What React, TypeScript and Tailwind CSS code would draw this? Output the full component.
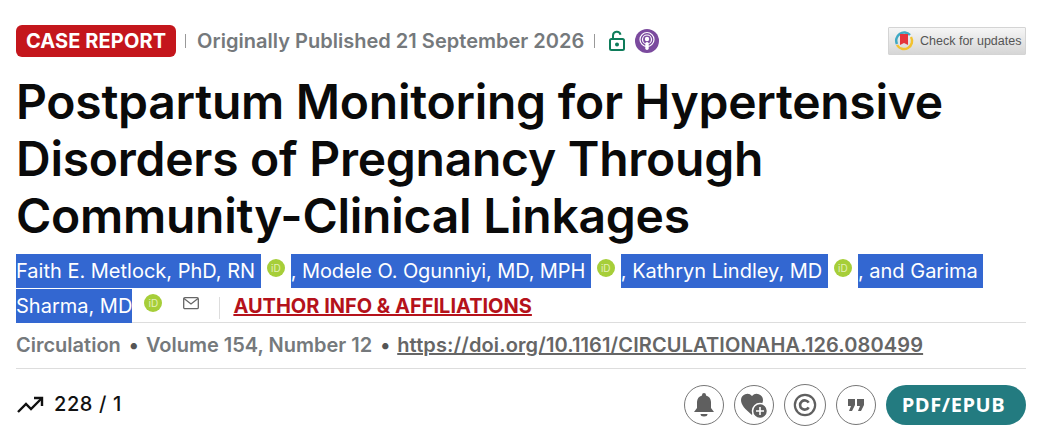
import React from "react";

const Orcid = ({ cls = "" }: { cls?: string }) => (
  <span className={`inline-flex items-center justify-center w-[18px] h-[18px] rounded-full bg-[#a6ce39] text-[#e4f0bb] text-[10px] leading-none align-[6px] ${cls}`}>
    iD
  </span>
);

const Sel = ({ children, cls = "" }: { children: React.ReactNode; cls?: string }) => (
  <span className={`bg-[#3367d1] text-white py-[5px] ${cls}`}>{children}</span>
);

const Circle = ({ children, size = "w-[40px] h-[40px]" }: { children: React.ReactNode; size?: string }) => (
  <button className={`${size} rounded-full border border-[#777] flex items-center justify-center bg-white`}>{children}</button>
);

export default function App() {
  return (
    <div className="w-[1039px] h-[439px] overflow-hidden bg-white pl-4 pr-[13px] pt-[25px] font-['Inter',sans-serif]">
      <div className="flex items-center h-[32px]">
        <span className="h-[32px] px-[10px] rounded-[6px] bg-[#c4161c] text-white font-bold text-[20px] leading-[32px] tracking-[0.1px]">CASE REPORT</span>
        <span className="w-px h-[14px] bg-[#999] ml-[9px] mr-[11px]" />
        <span className="text-[20px] font-semibold text-[#75797c] tracking-[0.02px]">Originally Published 21 September 2026</span>
        <span className="w-px h-[14px] bg-[#999] ml-[10px] mr-[13px]" />
        <svg width="18" height="22" viewBox="0 0 18 22" fill="none" stroke="#0e7c5a" strokeWidth="2">
          <rect x="2" y="9" width="14" height="11" rx="1.5" />
          <path d="M5 9V5.500a3.800 3.800 0 0 1 7.500-.8" />
          <circle cx="9" cy="14.500" r="1" fill="#0e7c5a" />
        </svg>
        <svg className="ml-[9px]" width="24" height="24" viewBox="0 0 24 24">
          <circle cx="12" cy="12" r="12" fill="#7b4a9e" />
          <g fill="none" stroke="#fff" strokeWidth="1.200">
            <circle cx="12" cy="10.500" r="7" />
            <circle cx="12" cy="10.500" r="4.500" />
          </g>
          <circle cx="12" cy="10" r="2.200" fill="#fff" />
          <rect x="10.300" y="13" width="3.400" height="8" rx="1.700" fill="#fff" />
        </svg>
        <div className="ml-auto w-[138px] h-[28px] flex items-center border border-[#d4d4d4] rounded-[1px] bg-gradient-to-b from-[#f6f6f6] to-[#d6d6d6] pl-[5px] gap-[6px] font-['Liberation_Sans',sans-serif] text-[12.5px] text-[#555]">
          <svg width="20" height="20" viewBox="0 0 20 20">
            <path d="M3 13A8 8 0 0 1 16 4" fill="none" stroke="#3fa9c4" strokeWidth="2.500" />
            <path d="M17 6A8 8 0 0 1 3 14" fill="none" stroke="#f2c230" strokeWidth="2.500" />
            <path d="M6 3h8v11l-4-2-4 2z" fill="#e5343c" />
          </svg>
          <span>Check for updates</span>
        </div>
      </div>

      <h1 className="mt-[16px] text-[48px] leading-[57px] font-semibold text-[#0a0a0a] tracking-[-0.26px]">
        Postpartum Monitoring for Hypertensive
        <br />
        Disorders of Pregnancy Through
        <br />
        Community-Clinical Linkages
      </h1>

      <div className="mt-[10px] h-[69px] text-[20px] leading-[35px] text-[#333] border-b border-[#ddd]">
        <Sel>Faith E. Metlock, PhD, RN&nbsp;</Sel>
        <Orcid cls="mx-[6px]" />
        <Sel cls="tracking-[-0.1px]">, Modele O. Ogunniyi, MD, MPH&nbsp;</Sel>
        <Orcid cls="mx-[6px]" />
        <Sel>, Kathryn Lindley, MD&nbsp;</Sel>
        <Orcid cls="mx-[6px]" />
        <Sel>, and Garima&nbsp;<wbr />Sharma, MD</Sel>
        <Orcid cls="ml-[12px]" />
        <svg className="inline-block ml-[21px] align-[3px]" width="16" height="13" viewBox="0 0 16 13" fill="none" stroke="#666" strokeWidth="1.300">
          <rect x="0.700" y="0.700" width="14.600" height="11" rx="1.200" />
          <path d="M1 1.500l7 5.500 7-5.500" />
        </svg>
        <span className="inline-block w-px h-[22px] bg-[#ddd] ml-[20px] mr-[13px] align-middle" />
        <a className="font-bold text-[#b5121b] underline">AUTHOR INFO &amp; AFFILIATIONS</a>
      </div>

      <div className="h-[46px] pb-[2px] flex items-center text-[20px] font-semibold text-[#75797c] border-b border-[#ddd]">
        <span>Circulation</span>
        <span className="ml-[8px] mr-[7px] text-[#555]">•</span>
        <span>Volume 154, Number 12</span>
        <span className="ml-[8px] mr-[7px] text-[#555]">•</span>
        <a className="underline text-[#666] tracking-[0.12px]">https://doi.org/10.1161/CIRCULATIONAHA.126.080499</a>
      </div>

      <div className="mt-[16px] h-[40px] flex items-center">
        <svg width="28" height="18" viewBox="0 0 28 18" fill="none" stroke="#111" strokeWidth="2.400">
          <path d="M2 16l8-8 5 5 10-10" />
          <path d="M18 2h8v8" />
        </svg>
        <span className="ml-[10px] pb-[2px] text-[20px] font-medium text-[#111] tracking-[0.6px]">228 / 1</span>
        <div className="ml-auto flex items-center">
          <Circle>
            <svg width="24" height="28" viewBox="0 0 24 26" fill="#5f5f5f">
              <path d="M12 1a2 2 0 0 1 2 2v.6A7 7 0 0 1 19 10v6l3 4H2l3-4v-6a7 7 0 0 1 5-6.400V3a2 2 0 0 1 2-2z" />
              <path d="M8.500 22h7a3.500 2.500 0 0 1-7 0z" />
            </svg>
          </Circle>
          <div className="ml-[10px]">
            <Circle>
              <svg width="30" height="30" viewBox="0 0 30 30" fill="#5f5f5f">
                <path d="M13 25C6 19 2 15 2 10a6.300 6.300 0 0 1 11-4 6.300 6.300 0 0 1 11 4c0 2-1 4-2 6H16z" />
                <circle cx="21" cy="21" r="7.500" stroke="#fff" strokeWidth="1.500" />
                <path d="M21 17v8M17 21h8" stroke="#fff" strokeWidth="1.600" />
              </svg>
            </Circle>
          </div>
          <div className="ml-[10px]">
            <Circle size="w-[42px] h-[42px]">
              <svg width="24" height="24" viewBox="0 0 26 26" fill="none" stroke="#5f5f5f" strokeWidth="2.400">
                <circle cx="13" cy="13" r="11" />
                <path d="M17 10.500a5 5 0 1 0 0 5" strokeWidth="2.800" />
              </svg>
            </Circle>
          </div>
          <div className="ml-[10px]">
            <Circle>
              <svg width="16" height="12" viewBox="0 0 16 12" fill="#5f5f5f">
                <path d="M0 0h7v6l-3 6H1l2-5H0zM9 0h7v6l-3 6h-3l2-5H9z" />
              </svg>
            </Circle>
          </div>
          <button className="ml-[10px] w-[140px] h-[40px] pr-[5px] rounded-full bg-[#237b80] text-white font-['Open_Sans',sans-serif] font-bold text-[20px] tracking-[0.6px]">PDF/EPUB</button>
        </div>
      </div>
    </div>
  );
}
